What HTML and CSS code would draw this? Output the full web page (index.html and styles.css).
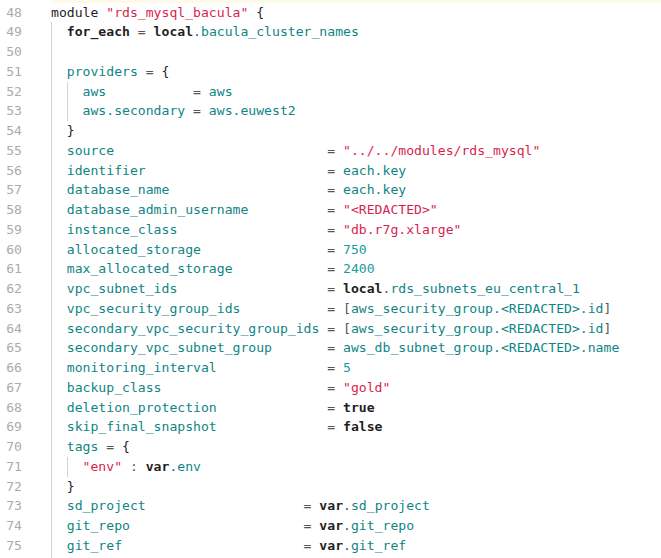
FILE: index.html
```html
<!DOCTYPE html>
<html>
<head>
<meta charset="utf-8">
<link rel="stylesheet" href="styles.css">
</head>
<body>
<div class="editor">
<div class="row cur"><span class="ln"></span><span class="code"></span></div>
<div class="row"><span class="ln">48</span><span class="code"><span class="d">module </span><span class="s">"rds_mysql_bacula"</span><span class="d"> {</span></span></div>
<div class="row"><span class="ln">49</span><span class="code"><span class="g"></span><span class="k">for_each</span><span class="o"> = </span><span class="k">local</span><span class="o">.</span><span class="p">bacula_cluster_names</span></span></div>
<div class="row"><span class="ln">50</span><span class="code"><span class="g"></span></span></div>
<div class="row"><span class="ln">51</span><span class="code"><span class="g"></span><span class="p">providers</span><span class="o"> = </span><span class="d">{</span></span></div>
<div class="row"><span class="ln">52</span><span class="code"><span class="g"></span><span class="g"></span><span class="p">aws           </span><span class="o">= </span><span class="p">aws</span></span></div>
<div class="row"><span class="ln">53</span><span class="code"><span class="g"></span><span class="g"></span><span class="p">aws.secondary </span><span class="o">= </span><span class="p">aws.euwest2</span></span></div>
<div class="row"><span class="ln">54</span><span class="code"><span class="g"></span><span class="d">}</span></span></div>
<div class="row"><span class="ln">55</span><span class="code"><span class="g"></span><span class="p">source                           </span><span class="o">= </span><span class="s">"../../modules/rds_mysql"</span></span></div>
<div class="row"><span class="ln">56</span><span class="code"><span class="g"></span><span class="p">identifier                       </span><span class="o">= </span><span class="p">each.key</span></span></div>
<div class="row"><span class="ln">57</span><span class="code"><span class="g"></span><span class="p">database_name                    </span><span class="o">= </span><span class="p">each.key</span></span></div>
<div class="row"><span class="ln">58</span><span class="code"><span class="g"></span><span class="p">database_admin_username          </span><span class="o">= </span><span class="s">"&lt;REDACTED&gt;"</span></span></div>
<div class="row"><span class="ln">59</span><span class="code"><span class="g"></span><span class="p">instance_class                   </span><span class="o">= </span><span class="s">"db.r7g.xlarge"</span></span></div>
<div class="row"><span class="ln">60</span><span class="code"><span class="g"></span><span class="p">allocated_storage                </span><span class="o">= </span><span class="n">750</span></span></div>
<div class="row"><span class="ln">61</span><span class="code"><span class="g"></span><span class="p">max_allocated_storage            </span><span class="o">= </span><span class="n">2400</span></span></div>
<div class="row"><span class="ln">62</span><span class="code"><span class="g"></span><span class="p">vpc_subnet_ids                   </span><span class="o">= </span><span class="k">local</span><span class="o">.</span><span class="p">rds_subnets_eu_central_1</span></span></div>
<div class="row"><span class="ln">63</span><span class="code"><span class="g"></span><span class="p">vpc_security_group_ids           </span><span class="o">= [</span><span class="p">aws_security_group.&lt;REDACTED&gt;.id</span><span class="o">]</span></span></div>
<div class="row"><span class="ln">64</span><span class="code"><span class="g"></span><span class="p">secondary_vpc_security_group_ids </span><span class="o">= [</span><span class="p">aws_security_group.&lt;REDACTED&gt;.id</span><span class="o">]</span></span></div>
<div class="row"><span class="ln">65</span><span class="code"><span class="g"></span><span class="p">secondary_vpc_subnet_group       </span><span class="o">= </span><span class="p">aws_db_subnet_group.&lt;REDACTED&gt;.name</span></span></div>
<div class="row"><span class="ln">66</span><span class="code"><span class="g"></span><span class="p">monitoring_interval              </span><span class="o">= </span><span class="n">5</span></span></div>
<div class="row"><span class="ln">67</span><span class="code"><span class="g"></span><span class="p">backup_class                     </span><span class="o">= </span><span class="s">"gold"</span></span></div>
<div class="row"><span class="ln">68</span><span class="code"><span class="g"></span><span class="p">deletion_protection              </span><span class="o">= </span><span class="k">true</span></span></div>
<div class="row"><span class="ln">69</span><span class="code"><span class="g"></span><span class="p">skip_final_snapshot              </span><span class="o">= </span><span class="k">false</span></span></div>
<div class="row"><span class="ln">70</span><span class="code"><span class="g"></span><span class="p">tags</span><span class="o"> = </span><span class="d">{</span></span></div>
<div class="row"><span class="ln">71</span><span class="code"><span class="g"></span><span class="g"></span><span class="s">"env"</span><span class="o"> : </span><span class="k">var</span><span class="o">.</span><span class="p">env</span></span></div>
<div class="row"><span class="ln">72</span><span class="code"><span class="g"></span><span class="d">}</span></span></div>
<div class="row"><span class="ln">73</span><span class="code"><span class="g"></span><span class="p">sd_project                    </span><span class="o">= </span><span class="k">var</span><span class="o">.</span><span class="p">sd_project</span></span></div>
<div class="row"><span class="ln">74</span><span class="code"><span class="g"></span><span class="p">git_repo                      </span><span class="o">= </span><span class="k">var</span><span class="o">.</span><span class="p">git_repo</span></span></div>
<div class="row"><span class="ln">75</span><span class="code"><span class="g"></span><span class="p">git_ref                       </span><span class="o">= </span><span class="k">var</span><span class="o">.</span><span class="p">git_ref</span></span></div>
<div class="row"><span class="ln"></span><span class="code"><span class="g"></span></span></div>
</div>
</body>
</html>
```

FILE: styles.css
```css
html, body {
  margin: 0;
  padding: 0;
  background: #ffffff;
  overflow: hidden;
}

.editor {
  display: flex;
  flex-direction: column;
  margin-top: -17.15px;
  font-family: "DejaVu Sans Mono", "Liberation Mono", monospace;
  font-size: 13.12px;
}

.row {
  display: flex;
  height: 19.75px;
  line-height: 19.75px;
  white-space: pre;
}

.ln {
  width: 22px;
  flex: none;
  text-align: right;
  color: #ababab;
}

.code {
  flex: 1;
  margin-left: 29px;
  color: #1f1f1f;
}

.cur .code {
  background: #fdfbe7;
}

.g {
  display: inline-block;
  width: 2ch;
  height: 19.75px;
  vertical-align: top;
  box-shadow: inset 1px 0 0 #d2d2d2;
}

.d { color: #1f1f1f; }
.k { color: #1f1f1f; font-weight: bold; }
.p { color: #108585; }
.n { color: #1a9c9c; }
.s { color: #d81f4e; }
.o { color: #555555; }
```
